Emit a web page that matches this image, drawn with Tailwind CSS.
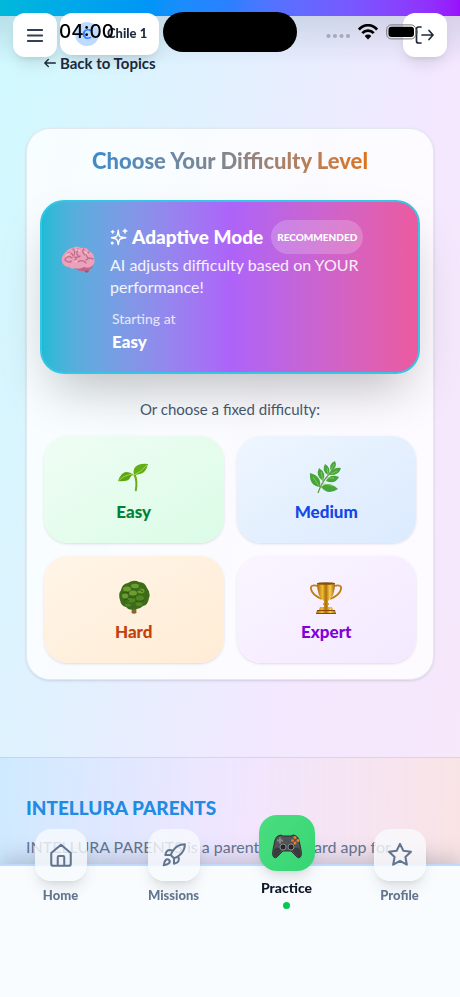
<!DOCTYPE html>
<html lang="en">
<head>
<meta charset="utf-8">
<meta name="viewport" content="width=device-width, initial-scale=1">
<title>Intellura Practice</title>
<script src="https://cdn.jsdelivr.net/npm/@tailwindcss/browser@4"></script>
</head>
<body class="font-['Lato',sans-serif] text-slate-800">
<div class="relative flex h-screen flex-col overflow-hidden bg-[linear-gradient(to_bottom_right,#cffafe,#f3e8ff_50%,#fce7f3)] bg-[length:100%_1800px]">

  <!-- Top app bar -->
  <header class="fixed inset-x-0 top-0 z-20">
    <div class="h-4 bg-linear-to-r from-cyan-500 via-blue-500 to-purple-600"></div>
    <div class="h-12 bg-linear-to-b from-slate-500/20 to-transparent"></div>
    <div class="absolute inset-x-0 top-[13px] flex items-start px-[13px]">
      <button aria-label="Menu" class="flex size-11 items-center justify-center rounded-xl bg-white shadow-lg">
        <svg class="size-5" viewBox="0 0 20 20" fill="none" stroke="#334155" stroke-width="1.8" stroke-linecap="round"><path d="M2.800 5h14.400M2.800 10.500h14.400M2.800 16h14.400"/></svg>
      </button>
      <button class="ml-[3px] flex h-[42px] items-center gap-2 rounded-xl bg-white pr-3 pl-[15px] text-[13px] font-black shadow-lg">
        <span class="flex size-6 items-center justify-center rounded-full bg-blue-200 text-sm font-bold text-blue-500">C</span>Chile 1
      </button>
      <button aria-label="Log out" class="ml-auto flex size-11 items-center justify-center rounded-xl bg-white shadow-lg">
        <svg class="size-5" viewBox="0 0 20 20" fill="none" stroke="#1e293b" stroke-width="1.7" stroke-linecap="round" stroke-linejoin="round"><path d="M6 2H3.500Q1.500 2 1.500 4v12q0 2 2 2H6M7 10h11M14 5.500l4 4.500-4 4.500"/></svg>
      </button>
    </div>
  </header>

  <!-- Device status bar -->
  <div class="pointer-events-none fixed inset-x-0 top-3 z-30 grid grid-cols-[1fr_134px_1fr] text-black">
    <div class="flex h-10 items-center justify-end pr-[49px] font-['Inter',sans-serif] text-[19px] font-medium">04:00</div>
    <div class="h-10 rounded-full bg-black"></div>
    <div class="flex h-10 items-center pl-[29px]">
      <svg class="mt-2 h-2 w-6" viewBox="0 0 24 8" fill="#a8a9bd"><circle cx="2.500" cy="4" r="2.100"/><circle cx="9" cy="4" r="2.100"/><circle cx="15.500" cy="4" r="2.100"/><circle cx="22" cy="4" r="2.100"/></svg>
      <svg class="ml-2 h-4 w-5 shrink-0" viewBox="0 0 20 16" fill="none" stroke="#000" stroke-width="2.700"><path d="M.9 5.500C6-.2 14-.2 19.100 5.500M4.300 9.100c3.100-3.400 8.300-3.400 11.400 0"/><path d="M10 15.500 6.700 12q3.300-2.800 6.600 0z" fill="#000" stroke="none"/></svg>
      <svg class="ml-2 h-4 w-8 shrink-0" viewBox="0 0 32 16"><rect x=".7" y=".9" width="29" height="14" rx="4.500" fill="none" stroke="#777" stroke-width="1"/><rect x="2.500" y="2.700" width="25.500" height="10.400" rx="3"/><path d="M30.700 5.500v5q1.300-.8 1.300-2.500t-1.300-2.500z" fill="#777"/></svg>
    </div>
  </div>

  <main class="px-[26px] pt-[51px] pb-[77px]">
    <a href="#topics" class="ml-[18px] flex h-6 w-fit items-center gap-1 text-[15px] font-bold">
      <svg class="size-3" viewBox="0 0 12 12" fill="none" stroke="currentColor" stroke-width="1.300" stroke-linecap="round" stroke-linejoin="round"><path d="M11.400 6H.8M4.300 2.500.8 6l3.500 3.500"/></svg>Back to Topics
    </a>

    <section class="mt-[53px] rounded-3xl border border-slate-300/50 bg-white/80 px-[17px] pt-4 pb-4 shadow-sm">
      <h1 class="text-center text-[22px] leading-8 font-black"><span class="bg-linear-to-r from-[#3b8bc9] via-[#85858a] to-[#dc7414] bg-clip-text text-transparent">Choose Your Difficulty Level</span></h1>

      <button class="-mx-1 mt-[23px] flex w-[calc(100%+8px)] items-start rounded-3xl border-2 border-[#36c5e4] bg-linear-to-r from-[#1dbbd5] via-[#ad63f9] to-[#ec5a9e] px-[18px] pt-[18px] pb-[18px] text-left text-white shadow-2xl">
        <svg class="mt-[22px] h-9 w-9 shrink-0" viewBox="0 0 36 36">
          <path d="M22 24l4-1 3 6q-2 3-4 1z" fill="#a74f76"/>
          <path d="M14 24q2 6 11 5 7-1 8-6l-9-3z" fill="#bf6587"/>
          <path d="M2 20q-1-6 3-9 2-4 7-5 5-3 9 0 6-1 8 3 5 2 5 7 2 5-2 8-3 3-8 1-5 3-9 1-3 2-6-1-5 0-7-5z" fill="#eba1b9"/>
          <path d="M5 17q3-4 7-1m-4-5q4-1 5 3m0-7q3 2 1 6m4-6q-3 6 2 8m4-8q-3 3 1 6m4-3q-4 3-1 6m5 1q-4-2-7 1m-9-3q-2 5-7 4m-5-1q3 3 6 2m7 0q4-3 8 1m-12-6q3 1 6-1" fill="none" stroke="#bd6a8b" stroke-width="1.200" stroke-linecap="round"/>
          <path d="M6 14q2-3 4-3m5-3q3-1 5 1m5 1q3 1 3 3M12 19q3-1 5 1" fill="none" stroke="#ffd0dd" stroke-width=".9" stroke-linecap="round"/>
        </svg>
        <span class="ml-[14px] block flex-1">
          <span class="flex h-[34px] items-center gap-1">
            <svg class="size-[18px] shrink-0" viewBox="0 0 24 24" fill="none" stroke="currentColor" stroke-width="2" stroke-linecap="round" stroke-linejoin="round"><path d="M11 3q.6 7.600 2.300 8.500T21 13q-6.500 1-7.700 2T11 22q-1-6-2.300-7T2 13q5.500-.6 6.700-1.500T11 3zM20 1.500v5M17.500 4h5M3.500 3.500v3M2 5h3"/><circle cx="3" cy="20" r="1"/></svg>
            <span class="text-[19px] font-black">Adaptive Mode</span>
            <span class="ml-1 flex h-[34px] items-center rounded-full bg-white/20 px-1.5 text-[10px] font-black">RECOMMENDED</span>
          </span>
          <span class="block text-base leading-[22px] text-white/90">AI adjusts difficulty based on YOUR performance!</span>
          <span class="mt-[11px] ml-0.5 block text-sm leading-5 text-white/80">Starting at</span>
          <span class="ml-0.5 block text-[17px] leading-[25px] font-black">Easy</span>
        </span>
      </button>

      <p class="mt-6 mb-4 text-center text-[15px] leading-[22px] text-slate-600">Or choose a fixed difficulty:</p>

      <div class="grid grid-cols-2 gap-[13px]">
        <button class="flex h-[107px] flex-col items-center rounded-3xl bg-linear-to-br from-[#effdf4] to-[#dbfce6] pt-6 text-[17px] font-black text-green-700 shadow-sm">
          <svg class="size-9" viewBox="0 0 36 36"><path d="M17.500 15q3 6 1.300 15.500 1 1.500 2 .2Q22.500 21 19.500 14z" fill="#71a91c"/><path d="M18 15Q16 8 22 5q5-2 10-1-2 9-8 10-4 1-6 1z" fill="#63ad16"/><path d="M18 15Q7 7 2 21q10 1 12-3 1-3 4-3z" fill="#5ca414"/><path d="M18 15q7-3 13-10M17 14Q8 15 3 20.500" stroke="#a2d646" fill="none"/></svg>
          <span class="leading-8">Easy</span>
        </button>
        <button class="flex h-[107px] flex-col items-center rounded-3xl bg-linear-to-br from-[#eef6ff] to-[#dbeafe] pt-6 text-[17px] font-black text-blue-700 shadow-sm">
          <svg class="size-9" viewBox="0 0 36 36"><path d="M10 33q3-9 8-15t7-10" stroke="#679d47" stroke-width="1.300" fill="none"/><g fill="#48a53a"><path d="M12 27Q1 26 2 13q12 3 10 14z"/><path d="M15 21q-8-5-4-13 8 5 4 13z"/><path d="M20 15q-7-4-3-11 7 4 3 11z"/><path d="M23 11q-3-7 4-10 3 6-4 10z"/><path d="M21 15q4-9 12-7-2 8-12 7z"/><path d="M18 21q4-8 13-4-4 8-13 4z"/><path d="M13 27q7-7 17 2-10 7-17-2z"/></g><path d="M5 17l6 9m2-14 2 8m4-12 1 6m3-4 3-6m-3 10 6-3m-10 7h7m-12 6q6 0 11 2" stroke="#8bcf62" fill="none" stroke-width=".8"/></svg>
          <span class="leading-8">Medium</span>
        </button>
        <button class="flex h-[107px] flex-col items-center rounded-3xl bg-linear-to-br from-[#fff5e8] to-[#ffecd5] pt-6 text-[17px] font-black text-[#c2410c] shadow-sm">
          <svg class="size-9" viewBox="0 0 36 36"><path d="M16 26h4l.5 7q-2.500 1.500-5 0z" fill="#896236"/><path d="M4 20Q2 14 5 10q1-6 7-7 6-4 11-1 6 0 8 6 4 5 2 10-1 7-6 8-4 4-9 3-5 2-8-2-5-1-6-7z" fill="#3c6b1a"/><g fill="#6d9d2e"><ellipse cx="11" cy="9" rx="4" ry="2.500"/><ellipse cx="19" cy="6" rx="4" ry="2.200"/><ellipse cx="25" cy="11" rx="3.500" ry="2.500"/><ellipse cx="17" cy="13" rx="4" ry="2.500"/><ellipse cx="9" cy="16" rx="3" ry="2.400"/></g><g fill="#538622"><ellipse cx="24" cy="18" rx="4" ry="2.600"/><ellipse cx="15" cy="20" rx="4" ry="2.500"/><ellipse cx="23" cy="24" rx="3.500" ry="2"/><ellipse cx="12" cy="25" rx="3" ry="1.600"/></g><path d="M7 13q3-2 6 0m8-3q4-1 6 2M13 17q4 2 7-1M8 20q3-2 5 1m7 0q4 2 8-1" stroke="#2c5713" fill="none"/></svg>
          <span class="leading-8">Hard</span>
        </button>
        <button class="flex h-[107px] flex-col items-center rounded-3xl bg-linear-to-br from-[#faf5ff] to-[#f4e9ff] pt-6 text-[17px] font-black text-purple-700 shadow-sm">
          <svg class="size-9" viewBox="0 0 36 36"><defs><linearGradient id="gold"><stop stop-color="#a96309"/><stop offset=".3" stop-color="#edbd35"/><stop offset=".5" stop-color="#ae6d08"/><stop offset=".72" stop-color="#f6d052"/><stop offset="1" stop-color="#a06009"/></linearGradient></defs><path d="M10 6Q2 4 3 9q1 6 11 10M26 6q8-2 7 3-1 6-11 10" fill="none" stroke="#c07f10" stroke-width="1.800"/><path d="M9 3h18q0 14-7 18v6h-4v-6Q9 17 9 3z" fill="url(#gold)"/><ellipse cx="18" cy="3.500" rx="9" ry="1.300" fill="#875009"/><path d="M15 23h6v2h-6zM12 27h12l1 3H11zM9 30h18l1 4H8z" fill="url(#gold)"/><path d="M9 30h18v1H9zm-1 3h20v1H8z" fill="#8e480a"/></svg>
          <span class="leading-8">Expert</span>
        </button>
      </div>
    </section>
  </main>

  <footer class="flex-1 border-t border-slate-400/25 bg-linear-to-r from-blue-300/20 via-purple-200/15 to-orange-200/25 px-[26px] pt-[34px]">
    <h2 class="text-[19px] leading-8 font-black text-[#208be2]">INTELLURA PARENTS</h2>
    <p class="mt-3 text-base leading-[22px] text-slate-500">INTELLURA PARENTS is a parent dashboard app for parents who want visibility into what their child does.</p>
  </footer>

  <!-- Bottom navigation -->
  <nav class="fixed inset-x-0 bottom-0 z-20 h-[133px] border-t-2 border-blue-200 bg-[#f8fcfe] px-1 shadow-[0_-6px_20px_rgba(71,85,105,0.28)]">
    <div class="grid grid-cols-4 text-[13px] font-black text-slate-500">
      <a href="#home" class="-mt-[37px] flex flex-col items-center">
        <span class="flex size-[52px] items-center justify-center rounded-2xl bg-slate-50/80 shadow-lg"><svg class="size-[26px]" viewBox="0 0 24 24" fill="none" stroke="currentColor" stroke-width="1.900" stroke-linecap="round" stroke-linejoin="round"><path d="M3 10.200 12 2.500l9 7.700V20q0 2-2 2H5q-2 0-2-2zM9 22v-8q0-1 1-1h4q1 0 1 1v8"/></svg></span>
        <span class="mt-1 leading-5">Home</span>
      </a>
      <a href="#missions" class="-mt-[37px] flex flex-col items-center">
        <span class="flex size-[52px] items-center justify-center rounded-2xl bg-slate-50/80 shadow-lg"><svg class="size-[26px]" viewBox="0 0 24 24" fill="none" stroke="currentColor" stroke-width="1.900" stroke-linecap="round" stroke-linejoin="round"><path d="M4.500 16.500c-1.500 1.260-2 5-2 5s3.740-.5 5-2c.71-.84.7-2.130-.09-2.910a2.180 2.180 0 0 0-2.910-.09zM12 15l-3-3a22 22 0 0 1 2-3.950A12.880 12.880 0 0 1 22 2c0 2.720-.78 7.500-6 11a22.350 22.350 0 0 1-4 2zM9 12H4s.55-3.030 2-4c1.620-1.080 5 0 5 0M12 15v5s3.030-.55 4-2c1.080-1.620 0-5 0-5"/></svg></span>
        <span class="mt-1 leading-5">Missions</span>
      </a>
      <a href="#practice" aria-current="page" class="-mt-[51px] flex flex-col items-center text-slate-900">
        <span class="flex size-14 items-center justify-center rounded-[18px] bg-linear-to-br from-[#4ade80] to-[#35d574] shadow-lg"><svg class="mt-2 h-7 w-8" viewBox="0 0 32 28"><path d="M7 3q3-2 5 0h8q2-2 5 0 3 1 4 9 2 8 1 11-2 4-6-1l-4-4h-8l-4 4q-4 5-6 1-1-3 1-11Q4 4 7 3z" fill="#515355" stroke="#2d3032"/><path d="M3 17q2-5 8 0l-4 5q-4 5-5 0zm26 0q-2-5-8 0l4 5q4 5 5 0z" fill="#393b3d"/><path d="M6 7.500h6M9 4.500v6" stroke="#85888a" stroke-width="1.800"/><circle cx="12" cy="14" r="3" fill="#252729" stroke="#888"/><circle cx="20" cy="14" r="3" fill="#252729" stroke="#888"/><g fill="#f27d28"><circle cx="24" cy="4.500" r="1.500"/><circle cx="27" cy="7.500" r="1.500"/><circle cx="24" cy="10" r="1.500"/><circle cx="21.500" cy="7.500" r="1.300"/></g></svg></span>
        <span class="mt-[7px] text-sm leading-5">Practice</span>
        <span class="mt-1 size-[7px] rounded-full bg-green-500"></span>
      </a>
      <a href="#profile" class="-mt-[37px] flex flex-col items-center">
        <span class="flex size-[52px] items-center justify-center rounded-2xl bg-slate-50/80 shadow-lg"><svg class="size-[26px]" viewBox="0 0 24 24" fill="none" stroke="currentColor" stroke-width="1.900" stroke-linecap="round" stroke-linejoin="round"><path d="m12 1.700 3.100 6.400 7 .9-5.100 4.900 1.300 7-6.300-3.400-6.300 3.400 1.300-7L1.900 9l7-.9z"/></svg></span>
        <span class="mt-1 leading-5">Profile</span>
      </a>
    </div>
  </nav>
</div>
</body>
</html>
